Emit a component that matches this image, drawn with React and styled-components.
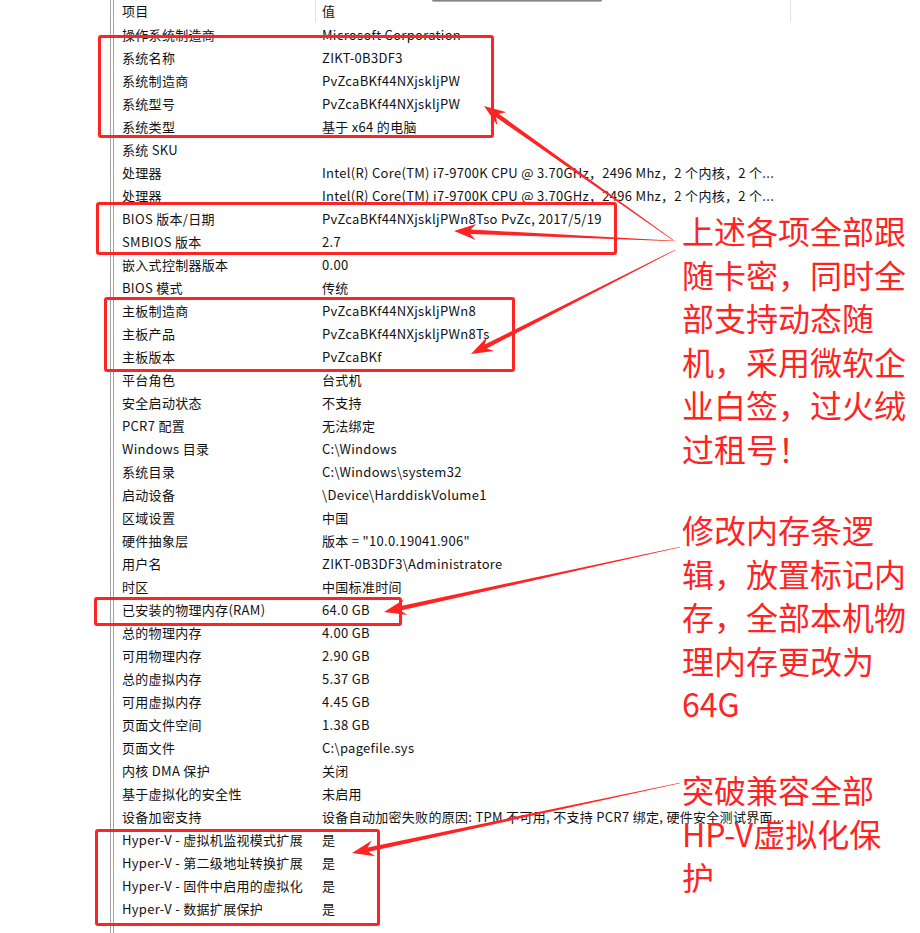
import React from 'react';
import styled, { createGlobalStyle } from 'styled-components';

const GlobalStyle = createGlobalStyle`
  html, body {
    margin: 0;
    padding: 0;
    background: #fff;
  }
  body {
    font-family: "Noto Sans CJK SC", "Noto Sans", sans-serif;
  }
`;

const RED = '#ff2424';

const Page = styled.div`
  position: relative;
  width: 920px;
  height: 933px;
  overflow: hidden;
  display: flex;
  background: #fff;
`;

const Gutter = styled.div`
  width: 110px;
  flex-shrink: 0;
`;

const Rail = styled.div`
  width: 2px;
  flex-shrink: 0;
  border-left: 1px solid #a3a3a3;
  border-right: 1px solid #a3a3a3;
`;

const ListPane = styled.div`
  flex: 1;
  display: flex;
  flex-direction: column;
  font-size: 13px;
  letter-spacing: 0.3px;
  color: #111;
`;

const HeaderRow = styled.div`
  display: grid;
  grid-template-columns: 202px 475px 1fr;
  height: 22px;
  margin-bottom: 1px;
`;

const HeaderCell = styled.div`
  line-height: 21px;
  padding-left: ${p => (p.$first ? '8px' : '6px')};
  border-right: ${p => (p.$divider ? '1px solid #e3e3e3' : 'none')};
`;

const Row = styled.div`
  display: grid;
  grid-template-columns: 202px 1fr;
  height: 23px;
  line-height: 23px;
  white-space: nowrap;
`;

const Label = styled.div`
  padding-left: 8px;
  overflow: hidden;
`;

const Value = styled.div`
  padding-left: 6px;
  overflow: hidden;
  max-width: 470px;
`;

const TopShadow = styled.div`
  position: absolute;
  left: 432px;
  top: 0;
  width: 170px;
  height: 2px;
  background: linear-gradient(to bottom, #6e6e6e, #c8c8c8);
  border-radius: 0 0 2px 2px;
`;

const Frame = styled.div`
  position: absolute;
  left: ${p => p.$x}px;
  top: ${p => p.$y}px;
  width: ${p => p.$w}px;
  height: ${p => p.$h}px;
  box-sizing: border-box;
  border: 3px solid ${RED};
  border-radius: 3px;
  pointer-events: none;
`;

const Callout = styled.div`
  position: absolute;
  left: 682px;
  top: ${p => p.$y}px;
  width: 226px;
  font-family: "Noto Sans CJK SC", sans-serif;
  font-size: 32px;
  line-height: 43.5px;
  color: ${RED};
  word-break: normal;
`;

const ArrowLayer = styled.svg`
  position: absolute;
  left: 0;
  top: 0;
  pointer-events: none;
`;

const rows = [
  ['操作系统制造商', 'Microsoft Corporation'],
  ['系统名称', 'ZIKT-0B3DF3'],
  ['系统制造商', 'PvZcaBKf44NXjskljPW'],
  ['系统型号', 'PvZcaBKf44NXjskljPW'],
  ['系统类型', '基于 x64 的电脑'],
  ['系统 SKU', ''],
  ['处理器', 'Intel(R) Core(TM) i7-9700K CPU @ 3.70GHz，2496 Mhz，2 个内核，2 个...'],
  ['处理器', 'Intel(R) Core(TM) i7-9700K CPU @ 3.70GHz，2496 Mhz，2 个内核，2 个...'],
  ['BIOS 版本/日期', 'PvZcaBKf44NXjskljPWn8Tso PvZc, 2017/5/19'],
  ['SMBIOS 版本', '2.7'],
  ['嵌入式控制器版本', '0.00'],
  ['BIOS 模式', '传统'],
  ['主板制造商', 'PvZcaBKf44NXjskljPWn8'],
  ['主板产品', 'PvZcaBKf44NXjskljPWn8Ts'],
  ['主板版本', 'PvZcaBKf'],
  ['平台角色', '台式机'],
  ['安全启动状态', '不支持'],
  ['PCR7 配置', '无法绑定'],
  ['Windows 目录', 'C:\\Windows'],
  ['系统目录', 'C:\\Windows\\system32'],
  ['启动设备', '\\Device\\HarddiskVolume1'],
  ['区域设置', '中国'],
  ['硬件抽象层', '版本 = "10.0.19041.906"'],
  ['用户名', 'ZIKT-0B3DF3\\Administratore'],
  ['时区', '中国标准时间'],
  ['已安装的物理内存(RAM)', '64.0 GB'],
  ['总的物理内存', '4.00 GB'],
  ['可用物理内存', '2.90 GB'],
  ['总的虚拟内存', '5.37 GB'],
  ['可用虚拟内存', '4.45 GB'],
  ['页面文件空间', '1.38 GB'],
  ['页面文件', 'C:\\pagefile.sys'],
  ['内核 DMA 保护', '关闭'],
  ['基于虚拟化的安全性', '未启用'],
  ['设备加密支持', '设备自动加密失败的原因: TPM 不可用, 不支持 PCR7 绑定, 硬件安全测试界面...'],
  ['Hyper-V - 虚拟机监视模式扩展', '是'],
  ['Hyper-V - 第二级地址转换扩展', '是'],
  ['Hyper-V - 固件中启用的虚拟化', '是'],
  ['Hyper-V - 数据扩展保护', '是'],
];

const frames = [
  { x: 98, y: 35, w: 396, h: 103 },
  { x: 96, y: 202, w: 521, h: 53 },
  { x: 104, y: 297, w: 411, h: 75 },
  { x: 94, y: 597, w: 308, h: 29 },
  { x: 95, y: 829, w: 285, h: 97 },
];

// tail -> tip, shaft tapers from a hairline to a few px
const arrows = [
  [673, 240, 484, 106],
  [675, 241, 454, 231],
  [675, 250, 471, 354],
  [680, 547, 384, 612],
  [680, 783, 352, 853],
];

function arrowPoints([x0, y0, x1, y1]) {
  const dx = x1 - x0;
  const dy = y1 - y0;
  const len = Math.hypot(dx, dy);
  const ux = dx / len;
  const uy = dy / len;
  const nx = -uy;
  const ny = ux;
  const L = 22;
  const H = 8;
  const w = 2.2;
  const bx = x1 - ux * L * 0.75;
  const by = y1 - uy * L * 0.75;
  const hx = x1 - ux * L;
  const hy = y1 - uy * L;
  const pts = [
    [x0 + nx * 0.3, y0 + ny * 0.3],
    [bx + nx * w, by + ny * w],
    [hx + nx * H, hy + ny * H],
    [x1, y1],
    [hx - nx * H, hy - ny * H],
    [bx - nx * w, by - ny * w],
    [x0 - nx * 0.3, y0 - ny * 0.3],
  ];
  return pts.map(p => p.map(v => v.toFixed(1)).join(',')).join(' ');
}

const App = () => (
  <>
    <GlobalStyle />
    <Page>
      <Gutter />
      <Rail />
      <ListPane>
        <HeaderRow>
          <HeaderCell $first $divider>项目</HeaderCell>
          <HeaderCell $divider>值</HeaderCell>
          <HeaderCell />
        </HeaderRow>
        {rows.map(([label, value], i) => (
          <Row key={i}>
            <Label>{label}</Label>
            <Value>{value}</Value>
          </Row>
        ))}
      </ListPane>

      <TopShadow />

      {frames.map((f, i) => (
        <Frame key={i} $x={f.x} $y={f.y} $w={f.w} $h={f.h} />
      ))}

      <ArrowLayer width="920" height="933" viewBox="0 0 920 933">
        {arrows.map((a, i) => (
          <polygon key={i} points={arrowPoints(a)} fill={RED} />
        ))}
      </ArrowLayer>

      <Callout $y={209}>上述各项全部跟随卡密，同时全部支持动态随机，采用微软企业白签，过火绒过租号！</Callout>
      <Callout $y={508}>修改内存条逻辑，放置标记内存，全部本机物理内存更改为64G</Callout>
      <Callout $y={768}>突破兼容全部HP-V虚拟化保护</Callout>
    </Page>
  </>
);

export default App;
